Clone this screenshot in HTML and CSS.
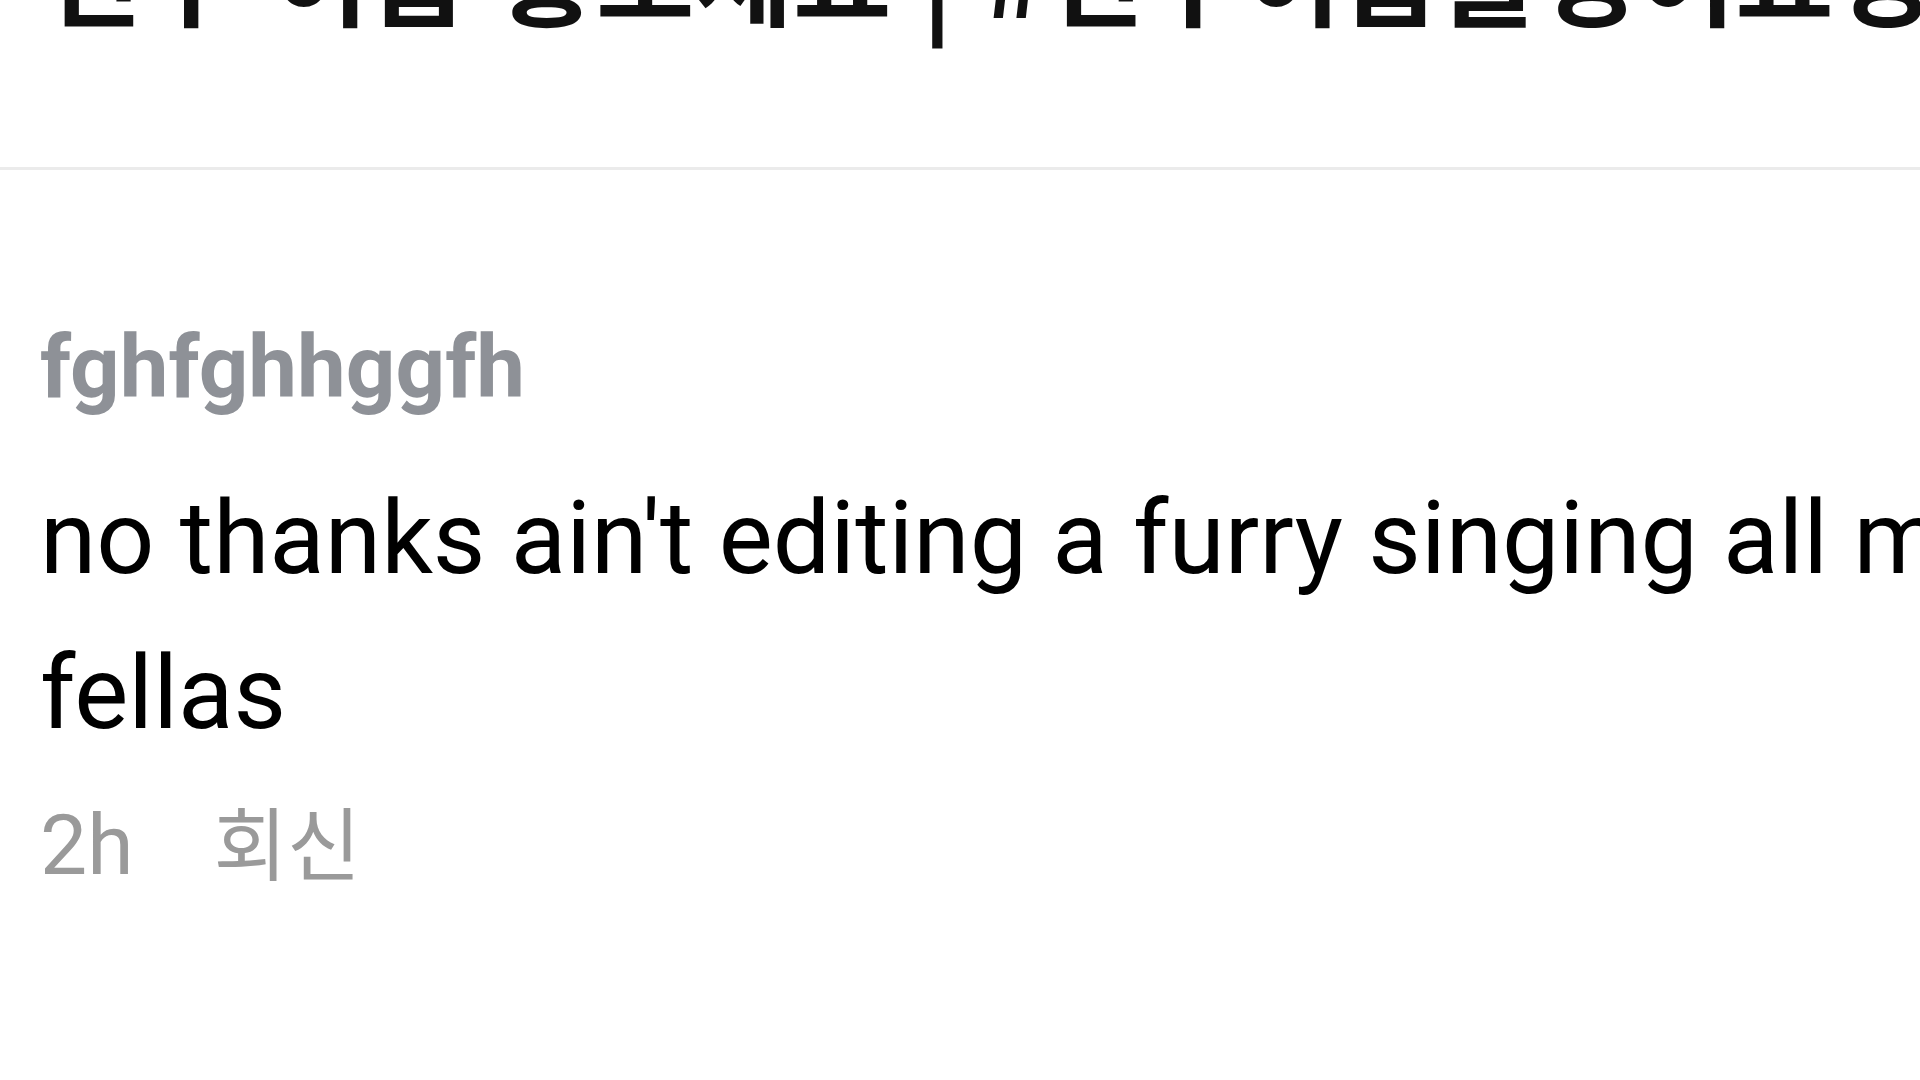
FILE: index.html
```html
<!DOCTYPE html>
<html lang="ko">
<head>
<meta charset="utf-8">
<title>Comment</title>
<link rel="stylesheet" href="styles.css">
</head>
<body>
  <header class="post-header">
    <h1 class="post-title">친구 이름 홍보세요 | #친구이름불렁어요영</h1>
  </header>
  <section class="comments">
    <article class="comment">
      <div class="comment-user">fghfghhggfh</div>
      <p class="comment-text">no thanks ain't editing a furry singing all my fellas</p>
      <div class="comment-meta">
        <span class="comment-time">2h</span>
        <span class="comment-reply">회신</span>
      </div>
    </article>
  </section>
</body>
</html>
```
FILE: styles.css
```css
html, body {
  margin: 0;
  padding: 0;
  background: #ffffff;
  width: 1920px;
  height: 1080px;
  overflow: hidden;
}

.post-header {
  height: 167px;
  border-bottom: 3px solid #ebebeb;
  overflow: hidden;
}

.post-title {
  margin: -82px 0 0 0;
  padding-left: 44px;
  font-family: "Noto Sans CJK KR", "Noto Sans", sans-serif;
  font-weight: 700;
  font-size: 107px;
  line-height: 107px;
  color: #111111;
  white-space: nowrap;
}

.comments {
  padding: 147px 0 0 40px;
}

.comment-user {
  font-family: Roboto, "Noto Sans", sans-serif;
  font-weight: 700;
  font-size: 87px;
  line-height: 100px;
  color: #8e9197;
}

.comment-text {
  margin: 44px 0 0 0;
  width: 2100px;
  font-family: Roboto, "Noto Sans", sans-serif;
  font-weight: 400;
  font-size: 102px;
  line-height: 155px;
  color: #000000;
}

.comment-meta {
  margin-top: 18px;
  display: flex;
  align-items: baseline;
  gap: 80px;
  font-size: 80px;
  line-height: 100px;
  color: #9a9a9a;
}

.comment-time {
  font-family: Roboto, "Noto Sans", sans-serif;
  font-size: 84px;
}

.comment-reply {
  font-family: "Noto Sans CJK KR", sans-serif;
  font-weight: 400;
}
```
